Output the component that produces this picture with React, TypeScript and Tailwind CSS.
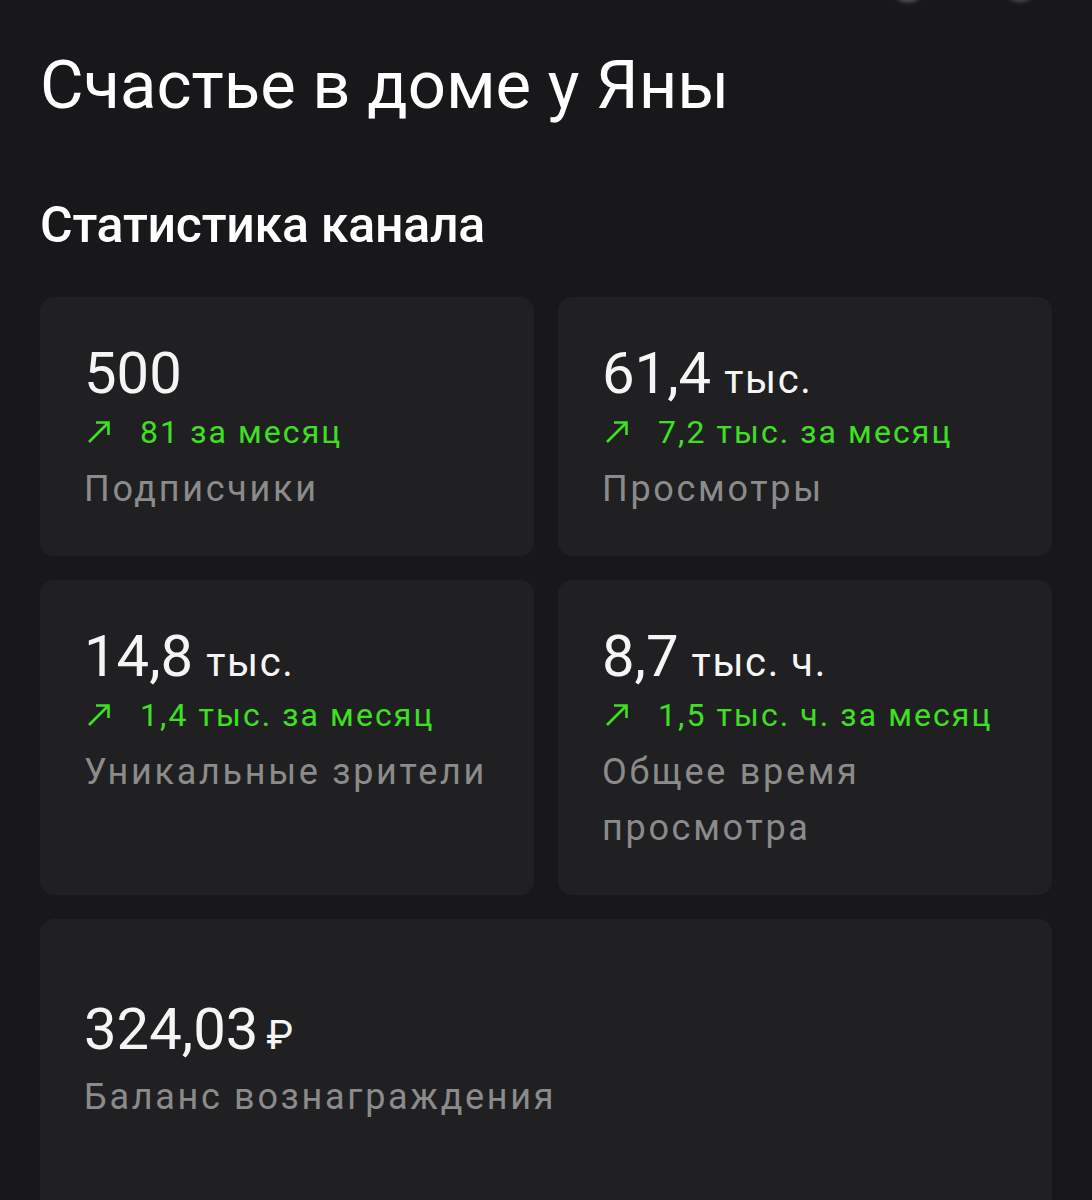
const ArrowUpRight = () => (
  <svg width="24" height="24" viewBox="0 0 24 24" fill="none" className="shrink-0">
    <path
      d="M2 22L21.5 2.5M9 2.5H21.5V15"
      stroke="#3fe022"
      strokeWidth="2.6"
      strokeLinecap="butt"
    />
  </svg>
);

interface StatCardProps {
  value: string;
  unit?: string;
  delta: string;
  label: string;
}

const StatCard = ({ value, unit, delta, label }: StatCardProps) => {
  return (
    <div className="rounded-[14px] bg-[#202022] px-[44px] pb-[39px] pt-[42px]">
      <div className="flex h-[68px] items-baseline gap-[13px] leading-[68px] text-[#f5f5f5]">
        <span className="text-[58px]">{value}</span>
        {unit && (
          <span className="text-[40px] tracking-[0.04em]">{unit}</span>
        )}
      </div>
      <div className="mt-[5px] flex h-[40px] items-center gap-[29px] text-[32px] leading-[40px] tracking-[0.065em] text-[#3fe022]">
        <span className="ml-[3px] flex">
          <ArrowUpRight />
        </span>
        <span>{delta}</span>
      </div>
      <div className="mt-[9px] text-[36px] leading-[56px] tracking-[0.075em] text-[#8b8b8b]">
        {label}
      </div>
    </div>
  );
};

const App = () => {
  return (
    <div
      className="relative h-[1200px] w-[1092px] overflow-hidden bg-[#18181a] px-[40px]"
      style={{ fontFamily: "Roboto, 'Noto Sans', sans-serif" }}
    >
      {/* cut-off toolbar icons at the very top */}
      <div className="absolute right-[54px] top-[-34px] flex gap-[76px]">
        <div className="h-[36px] w-[36px] rounded-full bg-[#5a5a5c] blur-[2px]" />
        <div className="h-[36px] w-[36px] rounded-full bg-[#4a4a4c] blur-[2px]" />
      </div>

      <h1 className="pt-[45px] text-[67px] leading-[80px] text-white">
        Счастье в доме у Яны
      </h1>
      <h2 className="mt-[72px] text-[50px] font-medium leading-[56px] tracking-[-0.005em] text-white">
        Статистика канала
      </h2>

      <div className="mt-[44px] grid grid-cols-2 gap-[24px]">
        <StatCard value="500" delta="81 за месяц" label="Подписчики" />
        <StatCard
          value="61,4"
          unit="тыс."
          delta="7,2 тыс. за месяц"
          label="Просмотры"
        />
        <StatCard
          value="14,8"
          unit="тыс."
          delta="1,4 тыс. за месяц"
          label="Уникальные зрители"
        />
        <StatCard
          value="8,7"
          unit="тыс. ч."
          delta="1,5 тыс. ч. за месяц"
          label="Общее время просмотра"
        />
        <div className="col-span-2 h-[320px] rounded-[14px] bg-[#202022] px-[44px] pt-[76px]">
          <div className="flex h-[68px] items-baseline gap-[8px] leading-[68px] text-[#f5f5f5]">
            <span className="text-[58px]">324,03</span>
            <span className="text-[40px]">₽</span>
          </div>
          <div className="mt-[6px] text-[36px] leading-[56px] tracking-[0.075em] text-[#8b8b8b]">
            Баланс вознаграждения
          </div>
        </div>
      </div>
    </div>
  );
};

export default App;
